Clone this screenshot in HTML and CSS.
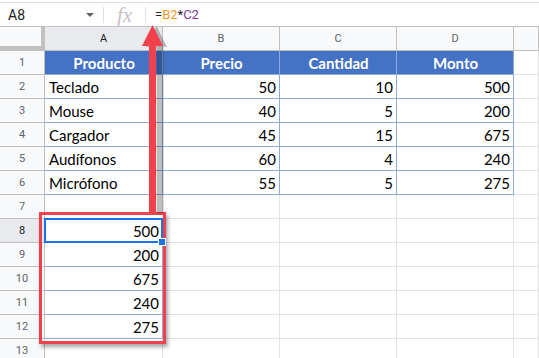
FILE: index.html
```html
<!DOCTYPE html>
<html lang="es">
<head>
  <meta charset="UTF-8" />
  <title>Hoja de cálculo</title>
  <link rel="stylesheet" href="styles.css">
</head>
<body>
  <!-- Formula bar -->
  <div class="fbar">
    <div class="namebox">
      <span class="cellref">A8</span>
      <span class="caret"></span>
    </div>
    <div class="fx">fx</div>
    <div class="formula">=<span class="ref-b">B2</span>*<span class="ref-c">C2</span></div>
  </div>

  <!-- Grid -->
  <div class="sheet">
    <div class="corner"></div>
    <div class="colhead active">A</div>
    <div class="colhead">B</div>
    <div class="colhead">C</div>
    <div class="colhead">D</div>
    <div class="colhead"></div>

    <div class="rowhead">1</div>
    <div class="cell th">Producto</div>
    <div class="cell th">Precio</div>
    <div class="cell th">Cantidad</div>
    <div class="cell th">Monto</div>
    <div class="cell"></div>

    <div class="rowhead">2</div>
    <div class="cell t">Teclado</div>
    <div class="cell t num">50</div>
    <div class="cell t num">10</div>
    <div class="cell t num">500</div>
    <div class="cell"></div>

    <div class="rowhead">3</div>
    <div class="cell t">Mouse</div>
    <div class="cell t num">40</div>
    <div class="cell t num">5</div>
    <div class="cell t num">200</div>
    <div class="cell"></div>

    <div class="rowhead">4</div>
    <div class="cell t">Cargador</div>
    <div class="cell t num">45</div>
    <div class="cell t num">15</div>
    <div class="cell t num">675</div>
    <div class="cell"></div>

    <div class="rowhead">5</div>
    <div class="cell t">Audífonos</div>
    <div class="cell t num">60</div>
    <div class="cell t num">4</div>
    <div class="cell t num">240</div>
    <div class="cell"></div>

    <div class="rowhead">6</div>
    <div class="cell t">Micrófono</div>
    <div class="cell t num">55</div>
    <div class="cell t num">5</div>
    <div class="cell t num">275</div>
    <div class="cell"></div>

    <div class="rowhead">7</div>
    <div class="cell bb"></div>
    <div class="cell"></div>
    <div class="cell"></div>
    <div class="cell"></div>
    <div class="cell"></div>

    <div class="rowhead active">8</div>
    <div class="cell t num selected">500</div>
    <div class="cell"></div>
    <div class="cell"></div>
    <div class="cell"></div>
    <div class="cell"></div>

    <div class="rowhead">9</div>
    <div class="cell t num">200</div>
    <div class="cell"></div>
    <div class="cell"></div>
    <div class="cell"></div>
    <div class="cell"></div>

    <div class="rowhead">10</div>
    <div class="cell t num">675</div>
    <div class="cell"></div>
    <div class="cell"></div>
    <div class="cell"></div>
    <div class="cell"></div>

    <div class="rowhead">11</div>
    <div class="cell t num">240</div>
    <div class="cell"></div>
    <div class="cell"></div>
    <div class="cell"></div>
    <div class="cell"></div>

    <div class="rowhead">12</div>
    <div class="cell t num">275</div>
    <div class="cell"></div>
    <div class="cell"></div>
    <div class="cell"></div>
    <div class="cell"></div>

    <div class="rowhead">13</div>
    <div class="cell"></div>
    <div class="cell"></div>
    <div class="cell"></div>
    <div class="cell"></div>
    <div class="cell"></div>

    <!-- Callout: red box around A8:A12 and arrow to the formula -->
    <div class="callout"></div>
    <svg class="arrow" width="30" height="200" viewBox="0 0 30 200">
      <polygon class="arrow-shadow" points="12.5,0 23,21 19.5,21 19.5,187 12.5,187 12.5,21 2,21" transform="translate(2,1)" />
      <polygon class="arrow-body" points="10.5,0 21,21 14,21 14,187 7,187 7,21 0,21" />
    </svg>
  </div>
</body>
</html>
```

FILE: styles.css
```css
body {
  margin: 0;
  background: #fff;
  font-family: Roboto, "Liberation Sans", Arial, sans-serif;
  overflow: hidden;
  width: 539px;
  height: 358px;
}

/* Formula bar */
.fbar {
  display: flex;
  align-items: center;
  height: 23px;
  margin-top: 2px;
  border-top: 1px solid #e0e0e0;
}

.namebox {
  width: 104px;
  height: 16px;
  display: flex;
  align-items: center;
  justify-content: space-between;
  border-right: 1px solid #e0e0e0;
  box-sizing: border-box;
  padding: 0 8px 0 8px;
}

.cellref {
  font-size: 14px;
  color: #202124;
}

.caret {
  width: 0;
  height: 0;
  border-left: 4px solid transparent;
  border-right: 4px solid transparent;
  border-top: 4px solid #5f6368;
  margin-right: 1px;
}

.fx {
  width: 42px;
  height: 16px;
  line-height: 16px;
  box-sizing: border-box;
  border-right: 1px solid #e0e0e0;
  text-align: center;
  font-family: "Liberation Serif", serif;
  font-style: italic;
  font-size: 21px;
  color: #c2c2c2;
}

.formula {
  padding-left: 9px;
  font-size: 13px;
  color: #202124;
}

.ref-b { color: #f7981d; }
.ref-c { color: #7e3794; }

/* Sheet grid */
.sheet {
  position: relative;
  display: grid;
  grid-template-columns: 45px 118px 117px 117px 117px 1fr;
  grid-auto-rows: 24px;
  border-top: 1px solid #c0c0c0;
}

.corner {
  background: #f8f9fa;
  border-right: 4px solid #c0c0c0;
  border-bottom: 5px solid #c0c0c0;
}

.colhead {
  background: #f8f9fa;
  border-right: 1px solid #c0c0c0;
  border-bottom: 1px solid #c0c0c0;
  font-size: 11px;
  color: #5f6368;
  display: flex;
  align-items: center;
  justify-content: center;
}

.rowhead {
  background: #f8f9fa;
  border-right: 1px solid #c0c0c0;
  border-bottom: 1px solid #c0c0c0;
  font-size: 11px;
  color: #5f6368;
  display: flex;
  align-items: center;
  justify-content: center;
}

.colhead.active,
.rowhead.active {
  background: #e8eaed;
  color: #202124;
}

.cell {
  border-right: 1px solid #e2e3e3;
  border-bottom: 1px solid #e2e3e3;
  font-family: Lato, "Liberation Sans", sans-serif;
  font-size: 15px;
  color: #000;
  display: flex;
  align-items: center;
  padding: 1px 3px 0 4px;
  white-space: nowrap;
}

.cell.t {
  border-color: #8eaadb;
}

.cell.bb {
  border-bottom-color: #8eaadb;
}

.cell.th {
  background: #4472c4;
  border-color: #8eaadb;
  color: #fff;
  font-weight: bold;
  justify-content: center;
}

.cell.num {
  justify-content: flex-end;
}

.cell.selected {
  position: relative;
}

.cell.selected::after {
  content: "";
  position: absolute;
  left: -1px;
  top: -1px;
  right: -1px;
  bottom: -1px;
  border: 2px solid #1a73e8;
}

.cell.selected::before {
  content: "";
  position: absolute;
  right: -4px;
  bottom: -4px;
  width: 6px;
  height: 6px;
  background: #1a73e8;
  border: 1px solid #fff;
  z-index: 2;
}

/* Red callout */
.callout {
  position: absolute;
  left: 39px;
  top: 185px;
  width: 127px;
  height: 132px;
  box-sizing: border-box;
  border: 3px solid #f0414d;
  box-shadow: 2px 3px 4px rgba(0, 0, 0, 0.35);
  pointer-events: none;
}

.arrow {
  position: absolute;
  left: 142px;
  top: -2px;
  overflow: visible;
}

.arrow-body {
  fill: #f0414d;
}

.arrow-shadow {
  fill: rgba(0, 0, 0, 0.25);
}
```
